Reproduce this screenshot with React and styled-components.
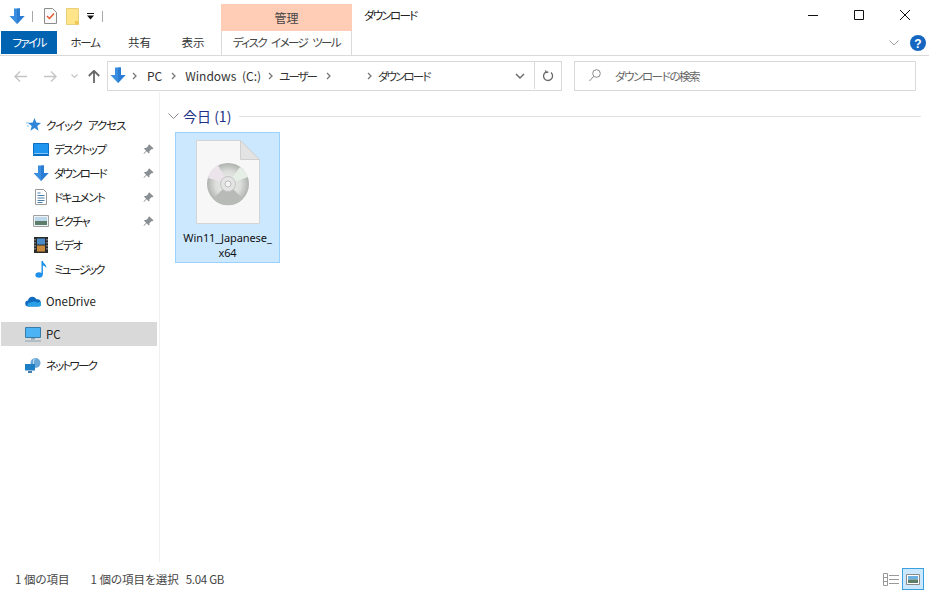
import React from 'react';
import styled, { createGlobalStyle } from 'styled-components';

const Global = createGlobalStyle`
  html, body { margin: 0; padding: 0; background: #fff; }
  body { font-family: "Noto Sans CJK JP", "Noto Sans", sans-serif; font-size: 12px; color: #1a1a1a; overflow: hidden; font-feature-settings: "palt" 1; }
  * { box-sizing: border-box; }
`;

const Win = styled.div`width: 929px; height: 593px; display: flex; flex-direction: column; background: #fff; overflow: hidden;`;
const TitleBar = styled.div`height: 31px; display: flex; flex: none;`;
const Qat = styled.div`width: 221px; display: flex; align-items: center; padding: 1px 0 0 9px;`;
const QatSep = styled.span`width: 1px; height: 11px; background: #a8a8a8; margin: ${p => p.$m || '0 11px 0 7px'};`;
const ContextHead = styled.div`
  width: 131px; margin-top: 4px; background: #ffcdb5; color: #444; font-size: 12px;
  display: flex; align-items: center; justify-content: center;
`;
const Title = styled.div`margin-left: 12px; padding-top: 4px; font-size: 11.5px; letter-spacing: -1.7px; line-height: 22px; color: #222;`;
const WinControls = styled.div`margin-left: auto; margin-right: 1px; display: flex; height: 31px;`;
const WinBtn = styled.div`width: 46px; display: flex; align-items: center; justify-content: center; padding-bottom: 2px;`;

const TabRow = styled.div`height: 25px; display: flex; flex: none; border-bottom: 1px solid #dadada; padding-left: 1px;`;
const FileTab = styled.div`
  width: 56px; height: 23px; background: #0063b1; color: #fff; font-size: 11.5px; letter-spacing: -1.6px; padding-bottom: 2px;
  display: flex; align-items: center; justify-content: center;
`;
const Tab = styled.div`
  width: ${p => p.$w}px; height: 23px; color: #333; font-size: 11.5px; letter-spacing: ${p => p.$ls || '0'}; padding-bottom: 2px;
  display: flex; align-items: center; justify-content: center;
`;
const ContextTab = styled.div`
  width: 131px; height: 24px; margin-left: 1px; border-left: 1px solid #dadada; border-right: 1px solid #dadada; padding-bottom: 3px;
  color: #444; font-size: 11.5px; letter-spacing: -1.6px; word-spacing: 4px; display: flex; align-items: center; justify-content: center; white-space: nowrap; background: #fff;
`;
const RibbonEnd = styled.div`margin-left: auto; display: flex; align-items: center; gap: 11px; padding: 0 3px 0 0; height: 24px;`;

const NavRow = styled.div`height: 36px; display: flex; flex: none; align-items: flex-start; padding-top: 5px;`;
const NavBtns = styled.div`width: 107px; height: 30px; display: flex; align-items: center; padding-left: 5px;`;
const NavSlot = styled.span`width: ${p => p.$w}px; display: flex; justify-content: center;`;
const Address = styled.div`
  width: 455px; height: 30px; border: 1px solid #d9d9d9; display: flex; align-items: center; padding: 0 0 1px 2px; font-size: 12px; color: #333; white-space: nowrap;
`;
const Crumb = styled.span`margin-left: ${p => p.$ml || 7}px; word-spacing: ${p => p.$ws || '0'}; letter-spacing: ${p => p.$ls || '0'}; font-size: ${p => p.$fs || '12px'};`;
const Chev = styled.svg`margin-left: ${p => p.$ml || 7}px; flex: none;`;
const AddressEnd = styled.div`margin-left: auto; display: flex; height: 100%; align-items: center;`;
const AddrDrop = styled.div`width: 28px; display: flex; justify-content: center;`;
const Refresh = styled.div`width: 27px; height: 100%; border-left: 1px solid #d9d9d9; display: flex; align-items: center; justify-content: center;`;
const Search = styled.div`
  width: 342px; height: 30px; margin-left: 12px; border: 1px solid #d9d9d9; display: flex; align-items: center; padding: 0 0 1px 14px; color: #666; font-size: 11.5px;
`;
const SearchText = styled.span`margin-left: 14px; letter-spacing: -1.4px;`;

const Body = styled.div`flex: 1; display: flex; min-height: 0;`;
const Side = styled.nav`width: 160px; flex: none; border-right: 1px solid #f0f0f0; padding: 21px 0 0 1px;`;
const SideItem = styled.div`
  width: 156px; height: 24px; display: flex; align-items: center; padding-left: ${p => p.$sub ? 32 : 24}px; padding-right: 2px;
  background: ${p => p.$active ? '#d9d9d9' : 'transparent'}; margin-top: ${p => p.$gap || 0}px; font-size: 11.5px; color: #222; white-space: nowrap;
`;
const SideIcon = styled.span`width: 16px; height: 16px; display: flex; align-items: center; justify-content: center; flex: none;`;
const SideLabel = styled.span`margin-left: 5px; letter-spacing: ${p => p.$ls || '-1.4px'}; word-spacing: ${p => p.$ws || '0'}; padding-bottom: 1px;`;
const Pin = styled.svg`margin-left: auto; margin-right: 1px;`;

const Main = styled.main`flex: 1; padding: 14px 8px 0 8px; min-width: 0;`;
const GroupHead = styled.div`display: flex; align-items: center; height: 20px; color: #1e3287; font-size: 14px;`;
const GroupCaret = styled.svg`margin: 0 4px 0 0; flex: none;`;
const GroupRule = styled.div`flex: 1; height: 1px; background: #e2e2e2; margin-left: 8px;`;
const FileTile = styled.div`
  width: 105px; height: 131px; margin: 6px 0 0 7px; background: #cce8ff; border: 1px solid #99d1ff;
  display: flex; flex-direction: column; align-items: center; padding-top: 7px;
`;
const FileName = styled.div`
  font-family: "Noto Sans", "Noto Sans CJK JP", sans-serif; font-size: 11px; line-height: 15px; text-align: center; color: #111; margin-top: 6px; letter-spacing: -0.1px;
`;

const Status = styled.footer`height: 31px; flex: none; display: flex; align-items: center; padding: 3px 2px 0 15px; font-size: 11.5px; color: #444; white-space: nowrap;`;
const StatusPart = styled.span`margin-right: ${p => p.$mr || 0}px; letter-spacing: ${p => p.$ls || '0'};`;
const ViewBtns = styled.div`margin-left: auto; display: flex; align-items: center; gap: 2px; padding-right: 3px;`;
const ViewActive = styled.div`width: 22px; height: 22px; background: #cce8ff; border: 1px solid #3aa0e0; display: flex; align-items: center; justify-content: center;`;

const DownArrow = ({ w = 16, h = 17 }) => (
  <svg width={w} height={h} viewBox="0 0 16 17"><path d="M5 0.5h6v7.5h4.500L8 16 .5 8H5z" fill="#3a8ee0" /><path d="M8 0.5h3v7.500h4.500L8 16z" fill="#2b7cd3" /></svg>
);
const ChevSm = (props) => (
  <Chev width="5" height="8" viewBox="0 0 5 8" {...props}><path d="M1 1l3 3-3 3" fill="none" stroke="#777" strokeWidth="1.3" /></Chev>
);
const PinIcon = () => (
  <Pin width="11" height="11" viewBox="0 0 11 11"><path d="M6.500 .5l4 4-1 .8-.8-.2L6.400 7.300l.1 1.400-.8.8-2-2.200L1 10l-.5-.5 2.600-2.700L1 4.800l.8-.8 1.400.1 2.200-2.300-.2-.8z" fill="#8a8f94" /></Pin>
);

export default function App() {
  return (
    <Win>
      <Global />
      <TitleBar>
        <Qat>
          <DownArrow />
          <QatSep />
          <svg width="13" height="16" viewBox="0 0 13 16"><path d="M.5.5h8l4 4v11H.5z" fill="#fafafa" stroke="#8c8c8c" /><path d="M3 8l2.500 2.500L10 5.500" fill="none" stroke="#e0552a" strokeWidth="1.400" /></svg>
          <svg style={{ marginLeft: 9 }} width="13" height="17" viewBox="0 0 13 17"><path d="M.5.5h12v16H.5z" fill="#ffe48a" stroke="#e8cf7a" /><path d="M9 13h3.500v3.500H9z" fill="#f0c850" /></svg>
          <svg style={{ marginLeft: 8 }} width="7" height="7" viewBox="0 0 7 7"><path d="M0 0h7v1H0zM0 2.500h7L3.500 6.500z" fill="#111" /></svg>
          <QatSep $m="0 0 0 8px" />
        </Qat>
        <ContextHead>管理</ContextHead>
        <Title>ダウンロード</Title>
        <WinControls>
          <WinBtn><svg width="10" height="10" viewBox="0 0 10 10"><path d="M0 5.500h10" stroke="#111" /></svg></WinBtn>
          <WinBtn><svg width="10" height="10" viewBox="0 0 10 10"><path d="M.5.5h9v9h-9z" fill="none" stroke="#111" /></svg></WinBtn>
          <WinBtn><svg width="10" height="10" viewBox="0 0 10 10"><path d="M0 0l10 10M10 0L0 10" stroke="#111" /></svg></WinBtn>
        </WinControls>
      </TitleBar>
      <TabRow>
        <FileTab>ファイル</FileTab>
        <Tab $w={56} $ls="-1.2px">ホーム</Tab>
        <Tab $w={53}>共有</Tab>
        <Tab $w={54}>表示</Tab>
        <ContextTab>ディスク イメージ ツール</ContextTab>
        <RibbonEnd>
          <svg width="10" height="6" viewBox="0 0 10 6"><path d="M.5.5L5 5 9.500.5" fill="none" stroke="#a0a0a0" /></svg>
          <svg width="16" height="16" viewBox="0 0 16 16"><circle cx="8" cy="8" r="8" fill="#1566c0" /><text x="8" y="12.500" textAnchor="middle" fill="#fff" fontSize="12" fontWeight="700" fontFamily="Liberation Sans, sans-serif">?</text></svg>
        </RibbonEnd>
      </TabRow>
      <NavRow>
        <NavBtns>
          <NavSlot $w={30}><svg width="13" height="11" viewBox="0 0 13 11"><path d="M6 .5L1 5.500l5 5M1 5.500h12" fill="none" stroke="#c4c4c4" strokeWidth="1.400" /></svg></NavSlot>
          <NavSlot $w={30}><svg width="13" height="11" viewBox="0 0 13 11"><path d="M7 .5l5 5-5 5M12 5.500H0" fill="none" stroke="#c4c4c4" strokeWidth="1.400" /></svg></NavSlot>
          <NavSlot $w={18}><svg width="7" height="5" viewBox="0 0 7 5"><path d="M.5.5L3.500 3.500 6.500.5" fill="none" stroke="#c4c4c4" strokeWidth="1.200" /></svg></NavSlot>
          <NavSlot $w={22}><svg width="12" height="13" viewBox="0 0 12 13"><path d="M.8 6L6 .8 11.200 6M6 1v12" fill="none" stroke="#666" strokeWidth="1.800" /></svg></NavSlot>
        </NavBtns>
        <Address>
          <DownArrow />
          <ChevSm $ml={6} />
          <Crumb $ml={10}>PC</Crumb>
          <ChevSm $ml={9} />
          <Crumb $ml={9} $ws="3px">Windows (C:)</Crumb>
          <ChevSm $ml={7} />
          <Crumb $ml={6} $fs="11.500px" $ls="-2px">ユーザー</Crumb>
          <ChevSm $ml={10} />
          <ChevSm $ml={36} />
          <Crumb $ml={6} $fs="11.500px" $ls="-1.800px">ダウンロード</Crumb>
          <AddressEnd>
            <AddrDrop><svg width="10" height="6" viewBox="0 0 10 6"><path d="M1 1l4 4 4-4" fill="none" stroke="#666" strokeWidth="1.400" /></svg></AddrDrop>
            <Refresh><svg width="12" height="13" viewBox="0 0 12 13"><path d="M4 2.500a4.500 4.500 0 1 0 5 .6M3.500 .8l.6 2.200 2.200-.5" transform="translate(0 .5)" fill="none" stroke="#666" strokeWidth="1.300" /></svg></Refresh>
          </AddressEnd>
        </Address>
        <Search>
          <svg width="12" height="13" viewBox="0 0 12 13"><circle cx="7.500" cy="4.500" r="3.800" fill="none" stroke="#888" /><path d="M4.700 7.300L.5 12" stroke="#888" /></svg>
          <SearchText>ダウンロードの検索</SearchText>
        </Search>
      </NavRow>
      <Body>
        <Side>
          <SideItem>
            <SideIcon><svg width="15" height="14" viewBox="0 0 15 14"><path d="M8.500 0l1.800 4.600 4.700.3-3.700 3 1.200 4.800-4-2.600-4 2.600 1.200-4.800-3.700-3 4.700-.3z" fill="#2f86d8" /><path d="M0 5h3M1 8h2" stroke="#8cc4ef" /></svg></SideIcon>
            <SideLabel $ls="-1.100px" $ws="5px">クイック アクセス</SideLabel>
          </SideItem>
          <SideItem $sub>
            <SideIcon><svg width="16" height="13" viewBox="0 0 16 13"><path d="M.5.5h15v11H.5z" fill="#1e96f0" stroke="#0a6fc2" /><path d="M1 10.500h14" stroke="#7fc8f8" /><path d="M0 12.500h16" stroke="#0a6fc2" /></svg></SideIcon>
            <SideLabel>デスクトップ</SideLabel>
            <PinIcon />
          </SideItem>
          <SideItem $sub>
            <SideIcon><DownArrow /></SideIcon>
            <SideLabel $ls="-1.800px">ダウンロード</SideLabel>
            <PinIcon />
          </SideItem>
          <SideItem $sub>
            <SideIcon><svg width="12" height="16" viewBox="0 0 12 16"><path d="M.5.5h8l3 3v12H.5z" fill="#fff" stroke="#9a9a9a" /><path d="M2.500 4h3M2.500 6.500h7M2.500 9h7M2.500 11.500h7M2.500 13.500h5" stroke="#4a7ea8" /></svg></SideIcon>
            <SideLabel>ドキュメント</SideLabel>
            <PinIcon />
          </SideItem>
          <SideItem $sub>
            <SideIcon><svg width="16" height="12" viewBox="0 0 16 12"><path d="M.5.5h15v11H.5z" fill="#eef4f6" stroke="#a0a0a0" /><path d="M2 2h12v4H2z" fill="#bcd8ea" /><path d="M2 6h12v4H2z" fill="#5d7f6a" /></svg></SideIcon>
            <SideLabel>ピクチャ</SideLabel>
            <PinIcon />
          </SideItem>
          <SideItem $sub>
            <SideIcon><svg width="14" height="16" viewBox="0 0 14 16"><path d="M0 0h14v16H0z" fill="#2a2a2a" /><path d="M3 1.500h8v6H3z" fill="#4a8ac8" /><path d="M3 8.500h8v6H3z" fill="#c88a3a" /><path d="M1 2v12M13 2v12" stroke="#bbb" strokeDasharray="1.500 1.500" /></svg></SideIcon>
            <SideLabel>ビデオ</SideLabel>
          </SideItem>
          <SideItem $sub>
            <SideIcon><svg width="12" height="17" viewBox="0 0 12 17"><ellipse cx="4" cy="14" rx="3.600" ry="2.800" fill="#1e90e8" /><path d="M6.500 14V0h1.400c.3 2.500 3.600 3.400 3.600 7-1-1.600-2.500-2.400-3.600-2.600V14z" fill="#1e90e8" /></svg></SideIcon>
            <SideLabel $ls="-1.900px">ミュージック</SideLabel>
          </SideItem>
          <SideItem $gap={8}>
            <SideIcon><svg width="16" height="11" viewBox="0 0 16 11"><path d="M3.500 10.500a3 3 0 0 1-.5-6 4.500 4.500 0 0 1 8.500-1.200A3.500 3.500 0 0 1 13 10.500z" fill="#0f6cbd" /><path d="M3 10.500a2.500 2.500 0 0 1 2-4c2 0 2-1 4-1s3 1 3.500 1.500a2 2 0 0 1 3.500 2c0 1-1 1.500-2 1.500z" fill="#2aa0e8" /></svg></SideIcon>
            <SideLabel $ls="0">OneDrive</SideLabel>
          </SideItem>
          <SideItem $gap={9} $active>
            <SideIcon><svg width="16" height="15" viewBox="0 0 16 15"><path d="M.5.5h15v10H.5z" fill="#4cb4f4" stroke="#3a7ca8" /><path d="M6 11h4v1.500H6z" fill="#8aa4b8" /><path d="M0 14h16" stroke="#8aa4b8" /></svg></SideIcon>
            <SideLabel $ls="0">PC</SideLabel>
          </SideItem>
          <SideItem $gap={7}>
            <SideIcon><svg width="16" height="15" viewBox="0 0 16 15"><circle cx="10.500" cy="5" r="5" fill="#6aa8d8" /><path d="M10 0.500c-2 1.500-2 6 0 9" fill="none" stroke="#d8e8f4" /><path d="M0 6h10v6.500H0z" fill="#1f7fc4" /><path d="M3 14h4" stroke="#4a7ea8" strokeWidth="2" /></svg></SideIcon>
            <SideLabel $ls="-1.800px">ネットワーク</SideLabel>
          </SideItem>
        </Side>
        <Main>
          <GroupHead>
            <GroupCaret width="11" height="7" viewBox="0 0 11 7"><path d="M.5.500l5 5 5-5" fill="none" stroke="#8a8a8a" /></GroupCaret>
            今日 (1)
            <GroupRule />
          </GroupHead>
          <FileTile>
            <svg width="64" height="84" viewBox="0 0 64 84">
              <defs>
                <radialGradient id="disc" cx="50%" cy="50%" r="50%">
                  <stop offset="0" stopColor="#f0f0f0" />
                  <stop offset="0.6" stopColor="#dcdedc" />
                  <stop offset="1" stopColor="#b0b2b0" />
                </radialGradient>
              </defs>
              <path d="M.5.500h44l19 19v64H.5z" fill="#f7f7f7" stroke="#d4d4d4" />
              <path d="M44.500.500v19h19z" fill="#e3e3e3" stroke="#cfcfcf" />
              <circle cx="32" cy="44" r="21" fill="url(#disc)" />
              <path d="M32 44L17 59a21 21 0 0 0 30 0z" fill="#b8bab8" />
              <path d="M32 44L12 38a21 21 0 0 1 10-13z" fill="#ebe4eb" />
              <path d="M32 44L52 37a21 21 0 0 0-8-10z" fill="#e6efe6" />
              <circle cx="32" cy="44" r="7.500" fill="#e4e4e4" stroke="#c4c4c4" />
              <circle cx="32" cy="44" r="3" fill="#f4f4f4" stroke="#bbb" />
            </svg>
            <FileName>Win11_Japanese_<br />x64</FileName>
          </FileTile>
        </Main>
      </Body>
      <Status>
        <StatusPart $mr={21}>1 個の項目</StatusPart>
        <StatusPart $mr={7}>1 個の項目を選択</StatusPart>
        <StatusPart $ls="-0.3px">5.04 GB</StatusPart>
        <ViewBtns>
          <svg width="17" height="13" viewBox="0 0 17 13"><path d="M.5.500h4v12h-4zM.5 4.500h4M.5 8.500h4" fill="none" stroke="#999" /><path d="M6 2.500h10M6 6.500h10M6 10.500h10" stroke="#999" /></svg>
          <ViewActive><svg width="14" height="11" viewBox="0 0 14 11"><path d="M.5.500h13v10H.5z" fill="#fff" stroke="#8a8a8a" /><path d="M2 2h10v3.500H2z" fill="#6ab0e0" /><path d="M2 5.500h10V9H2z" fill="#5d7f6a" /></svg></ViewActive>
        </ViewBtns>
      </Status>
    </Win>
  );
}
